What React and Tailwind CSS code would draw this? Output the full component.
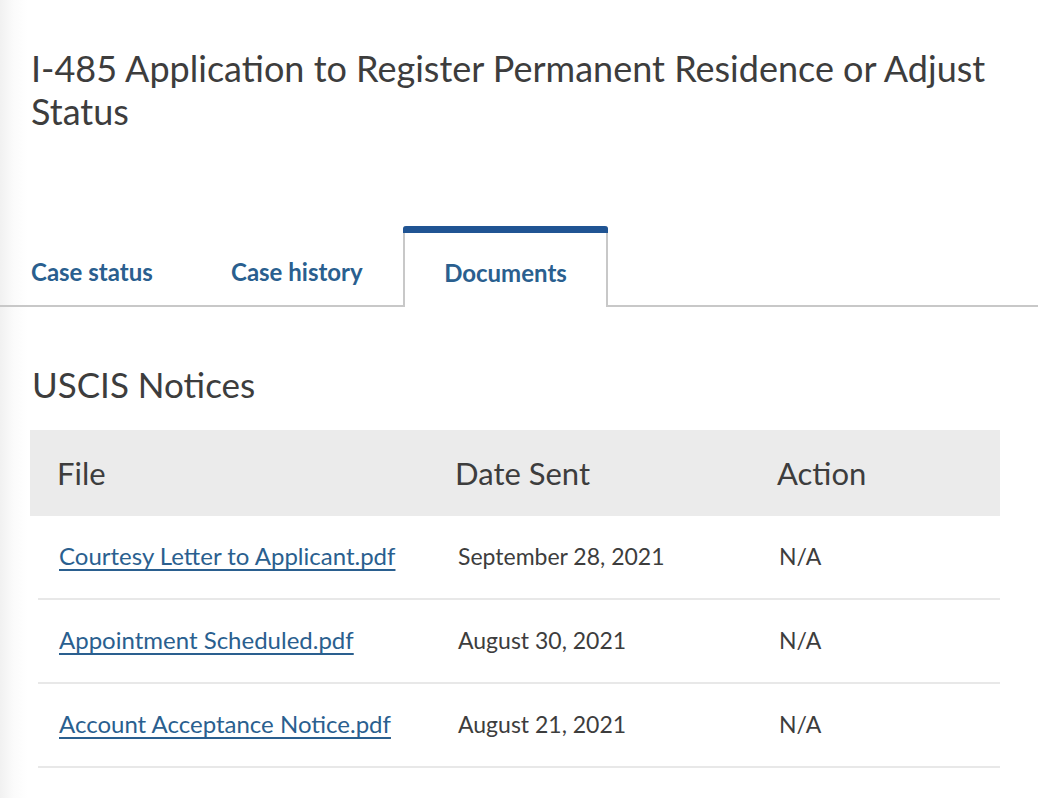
export default function App() {
  const rows = [
    { file: "Courtesy Letter to Applicant.pdf", date: "September 28, 2021" },
    { file: "Appointment Scheduled.pdf", date: "August 30, 2021" },
    { file: "Account Acceptance Notice.pdf", date: "August 21, 2021" },
  ];
  return (
    <div
      className="min-h-[798px] w-full bg-[linear-gradient(to_right,#f1f1f1_0px,#fbfbfb_14px,#ffffff_28px)] text-[#3d3d3d]"
      style={{ fontFamily: "Lato, 'Open Sans', sans-serif" }}
    >
      <div className="pl-[31px] pr-[40px] pt-[47px]">
        <h1 className="text-[36px] leading-[43px] font-normal text-[#3d3d3d]">
          I-485 Application to Register Permanent Residence or Adjust Status
        </h1>
      </div>

      <div className="mt-[93px] flex border-b-2 border-[#c8c8c8]">
        <div className="flex w-[192px] items-center pl-[31px] pt-[12px]">
          <span className="text-[24px] font-bold text-[#2a5f8f]">Case status</span>
        </div>
        <div className="flex w-[211px] items-center pl-[39px] pt-[12px]">
          <span className="text-[24px] font-bold text-[#2a5f8f]">Case history</span>
        </div>
        <div className="-mb-[2px] flex h-[81px] w-[205px] flex-col rounded-t-[3px] border-x-2 border-[#c8c8c8] bg-white">
          <div className="-mx-[2px] h-[7px] rounded-t-[3px] bg-[#205493]"></div>
          <div className="flex flex-1 items-center justify-center pt-[5px]">
            <span className="text-[24px] font-bold text-[#2a5f8f]">Documents</span>
          </div>
        </div>
      </div>

      <div className="pl-[32px] pt-[57px]">
        <h2 className="text-[35px] leading-[40px] font-normal text-[#3d3d3d]">USCIS Notices</h2>
      </div>

      <div className="ml-[30px] mt-[26px] w-[970px]">
        <div className="grid h-[86px] grid-cols-[425px_322px_1fr] items-center bg-[#ebebeb] text-[31px] text-[#3d3d3d]">
          <div className="pl-[27px]">File</div>
          <div>Date Sent</div>
          <div>Action</div>
        </div>
        {rows.map((r) => (
          <div
            key={r.file}
            className="ml-[8px] grid h-[84px] grid-cols-[420px_321px_1fr] items-center border-b-2 border-[#e8e8e8] pb-[2px]"
          >
            <div className="pl-[21px]">
              <a href="#" className="text-[24px] text-[#2a5f8f] underline decoration-[1.5px] underline-offset-[4px]">
                {r.file}
              </a>
            </div>
            <div className="text-[23px] text-[#3d3d3d]">{r.date}</div>
            <div className="text-[23px] text-[#3d3d3d]">N/A</div>
          </div>
        ))}
      </div>
    </div>
  );
}
